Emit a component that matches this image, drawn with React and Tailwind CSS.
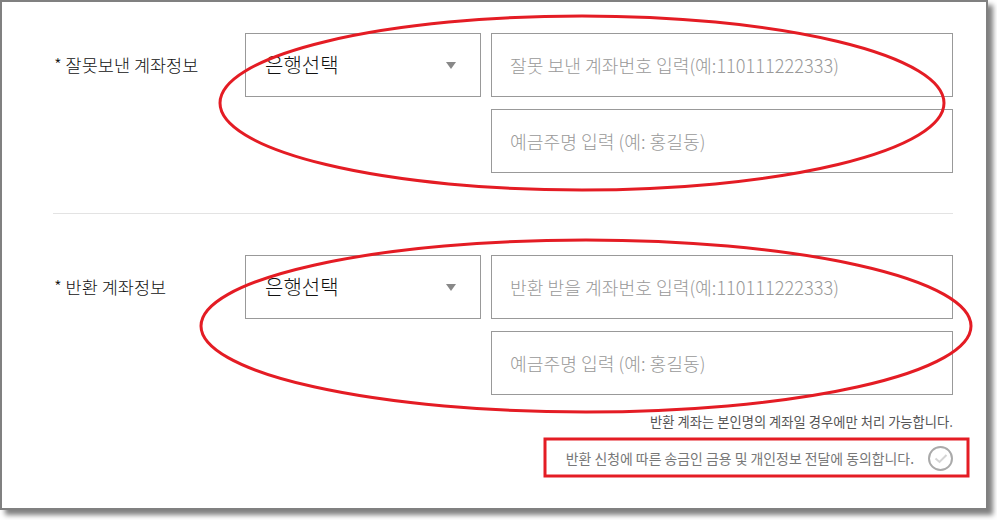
import React from 'react';

const font = { fontFamily: '"Noto Sans CJK KR", "Noto Sans", sans-serif' };

const BankSelect = () => (
  <div className="w-[236px] h-16 shrink-0 border border-[#999] flex items-center justify-between pl-[19px] pr-[24px]">
    <span className="text-[20px] font-light text-[#111]">은행선택</span>
    <span className="w-0 h-0 border-l-[5px] border-r-[5px] border-t-[7px] border-l-transparent border-r-transparent border-t-[#888]" />
  </div>
);

const TextBox = ({ placeholder }) => (
  <input
    type="text"
    placeholder={placeholder}
    className="w-[462px] h-16 border border-[#999] pl-[18px] text-[18.2px] font-light text-[#333] placeholder:text-[#999] outline-none"
  />
);

const AccountSection = ({ label, accountPlaceholder }) => (
  <div className="flex">
    <div className="w-[192px] h-16 shrink-0 flex items-center text-[17.5px] font-light text-[#111] pl-px">{label}</div>
    <BankSelect />
    <div className="ml-[10px] flex flex-col gap-3">
      <TextBox placeholder={accountPlaceholder} />
      <TextBox placeholder="예금주명 입력 (예: 홍길동)" />
    </div>
  </div>
);

export default function App() {
  return (
    <div className="w-[997px] h-[520px] bg-white overflow-hidden" style={font}>
      <div className="relative w-[988px] h-[510px] border-2 border-[#808080] bg-white shadow-[5px_5px_5px_rgba(0,0,0,0.5)] pl-[51px] pr-[33px] pt-[31px]">
        <AccountSection label="* 잘못보낸 계좌정보" accountPlaceholder="잘못 보낸 계좌번호 입력(예:110111222333)" />

        <div className="mt-10 border-t border-[#e3e3e3]" />

        <div className="mt-[41px]">
          <AccountSection label="* 반환 계좌정보" accountPlaceholder="반환 받을 계좌번호 입력(예:110111222333)" />
        </div>

        <p className="mt-[18px] h-[18px] leading-[18px] text-right text-[13.3px] text-[#555]">
          반환 계좌는 본인명의 계좌일 경우에만 처리 가능합니다.
        </p>

        <div className="mt-[15px] flex items-center justify-end gap-[14px]">
          <span className="text-[13.9px] text-[#777]">반환 신청에 따른 송금인 금용 및 개인정보 전달에 동의합니다.</span>
          <span className="w-[25px] h-[25px] rounded-full border-2 border-[#aaa] flex items-center justify-center">
            <svg width="14" height="11" viewBox="0 0 14 11">
              <path d="M1.5 5.5 L5.5 9 L12.5 2" fill="none" stroke="#d4d4d4" strokeWidth="2" />
            </svg>
          </span>
        </div>

        {/* red annotation marks */}
        <svg className="absolute -left-[2px] -top-[2px] pointer-events-none" width="997" height="520">
          <ellipse cx="582" cy="103" rx="362" ry="87" fill="none" stroke="#e41c24" strokeWidth="3" />
          <ellipse cx="586" cy="326" rx="385" ry="86" fill="none" stroke="#e41c24" strokeWidth="3" />
          <rect x="545" y="439" width="423" height="37" fill="none" stroke="#e41c24" strokeWidth="3" />
        </svg>
      </div>
    </div>
  );
}
